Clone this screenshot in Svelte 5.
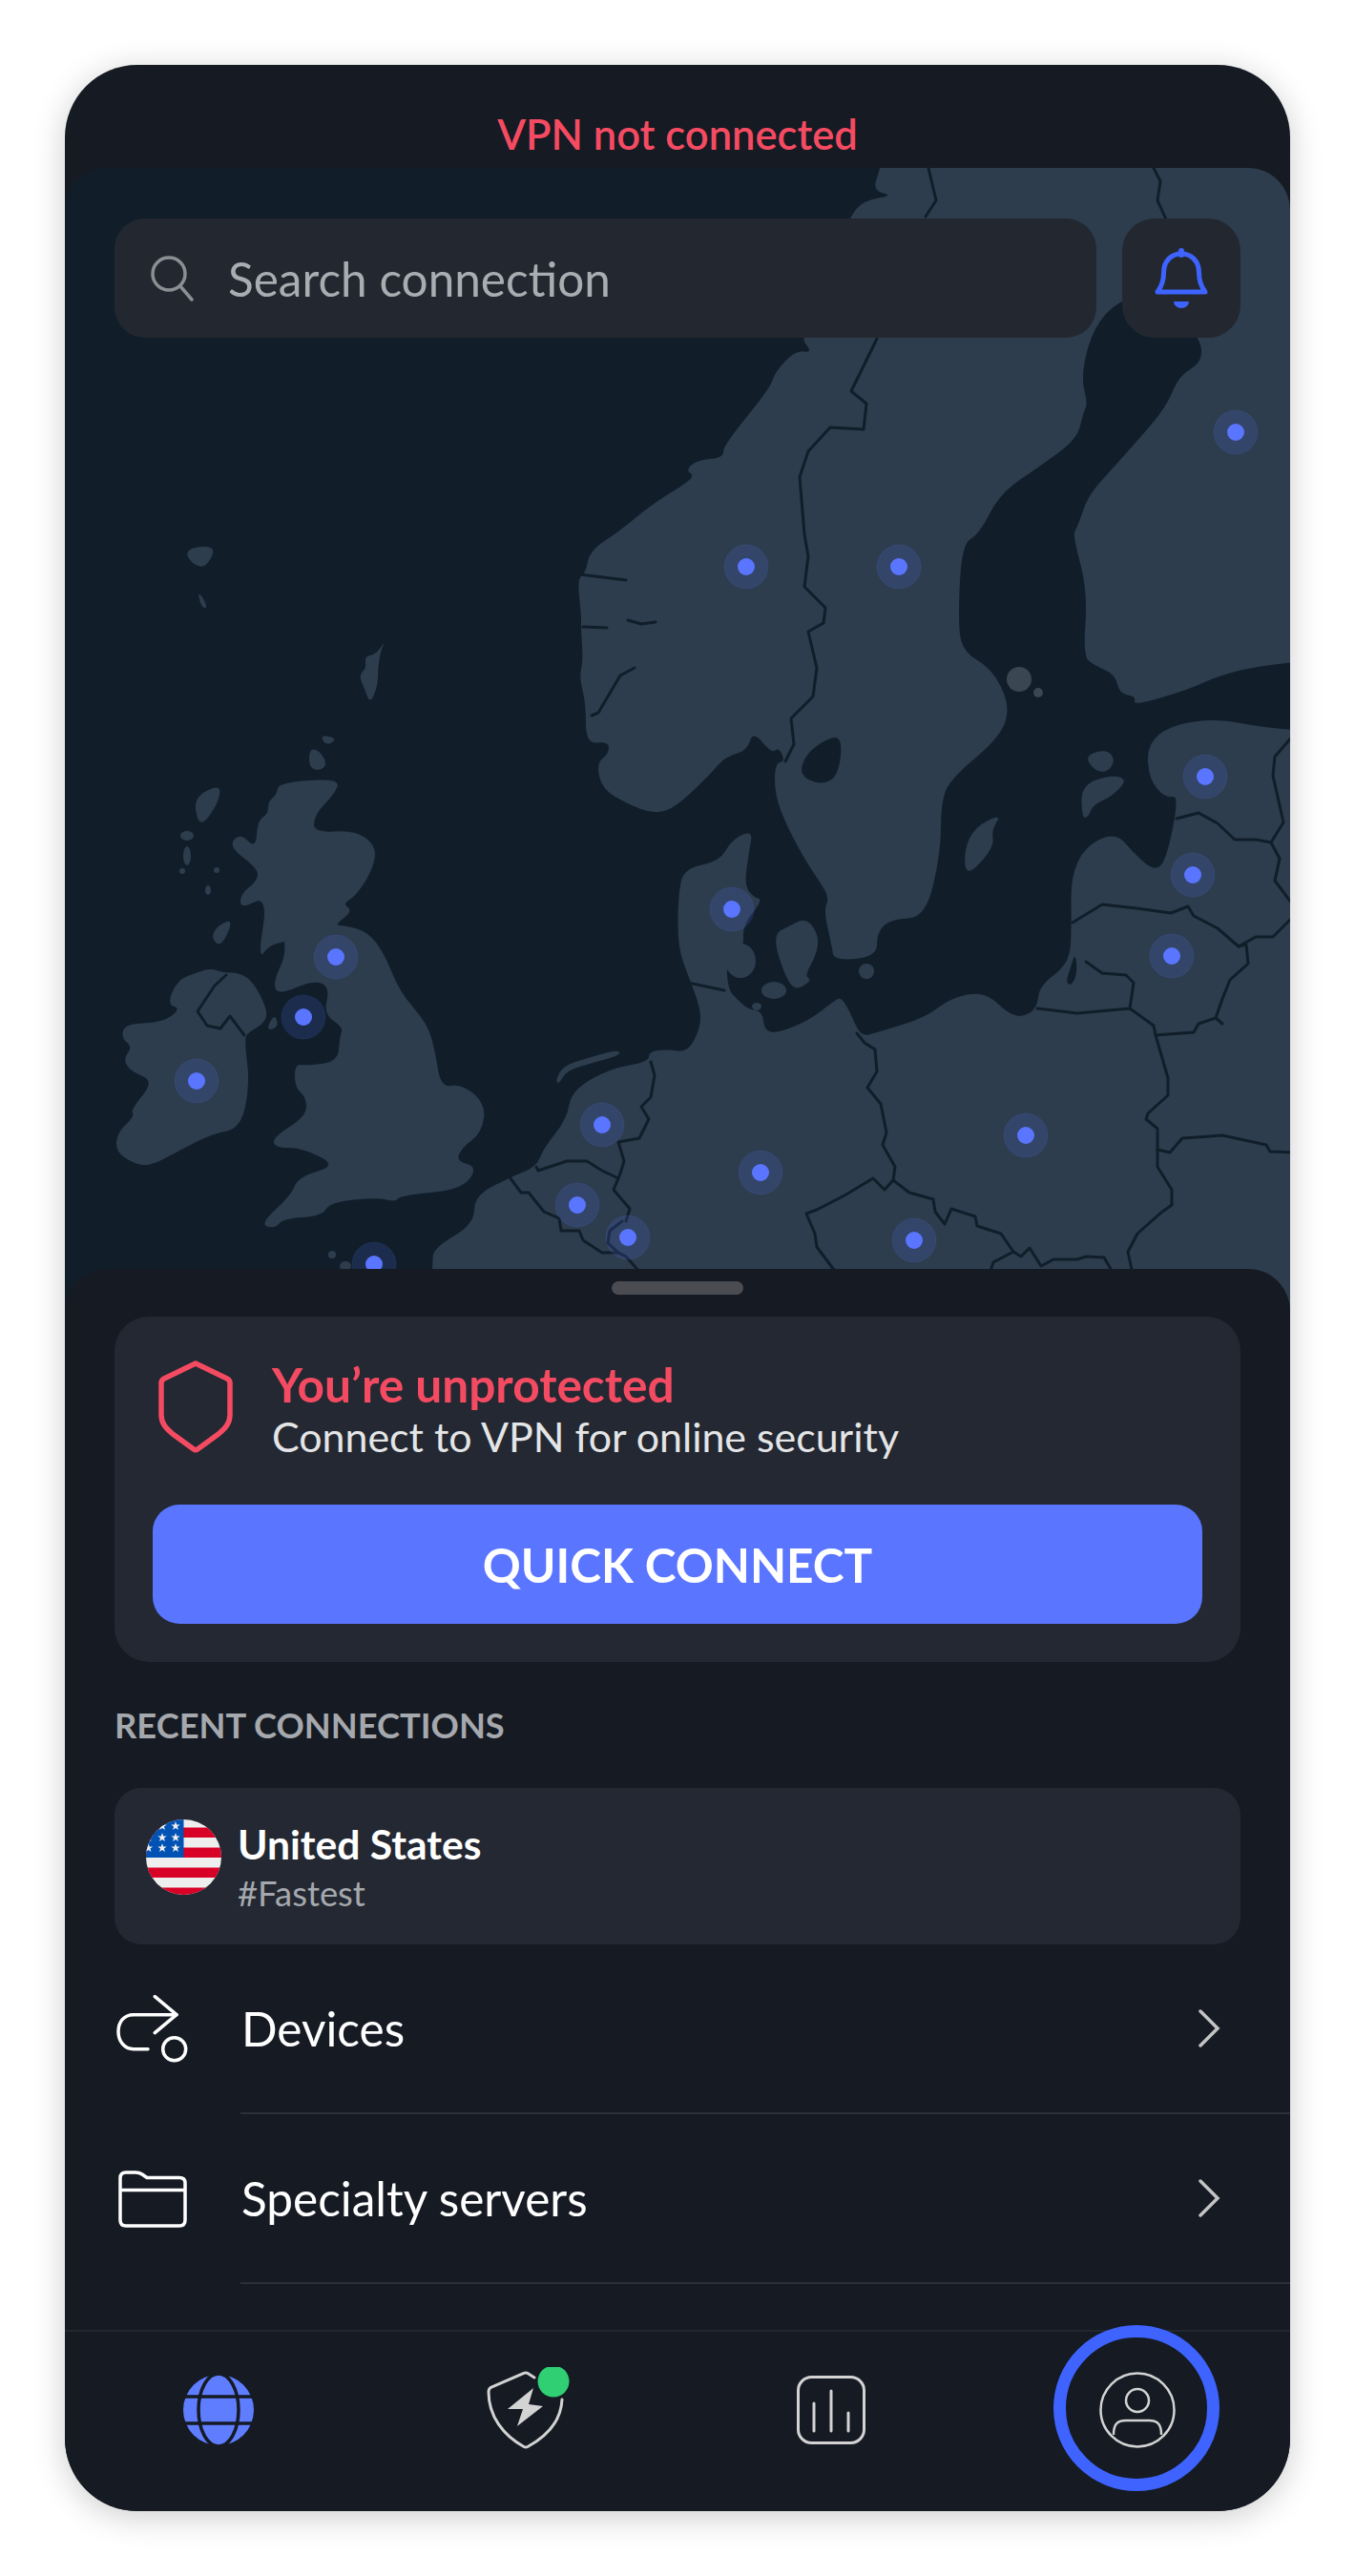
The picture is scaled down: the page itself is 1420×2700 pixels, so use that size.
<script>
    // turn "x,y x,y ..." into a soft closed outline
    function pts(s) {
        return s.trim().split(/\s+/).map((p) => p.split(",").map(Number));
    }
    function smooth(s) {
        const p = pts(s);
        const mid = (a, b) => [(a[0] + b[0]) / 2, (a[1] + b[1]) / 2];
        let start = mid(p[p.length - 1], p[0]);
        let d = `M${start[0]} ${start[1]}`;
        p.forEach((c, i) => {
            const m = mid(c, p[(i + 1) % p.length]);
            d += `Q${c[0]} ${c[1]} ${m[0]} ${m[1]}`;
        });
        return d + "Z";
    }
    function line(s) {
        return "M" + pts(s).map((c) => c.join(" ")).join("L");
    }

    const land = [
        // Norway, Sweden, Finland
        "932,120 923,176 914,200 937,205 905,210 890,228 860,300 838,353 852,370 834,367 812,390 807,407 758,467 758,480 731,482 718,493 730,500 685,527 649,557 618,577 614,600 605,607 609,643 609,660 611,693 607,710 614,737 614,780 638,777 638,790 625,800 631,827 658,843 685,853 707,847 743,813 760,793 783,787 789,766 809,790 816,783 823,798 812,800 812,833 825,867 847,907 870,940 863,953 872,993 874,1007 919,1003 919,977 934,963 970,962 986,893 986,843 995,817 1048,773 1059,740 1039,700 1008,683 1004,647 1008,570 1026,560 1048,517 1088,490 1129,460 1135,433 1140,423 1133,397 1142,353 1164,320 1210,300 1258,353 1260,380 1236,393 1222,427 1191,463 1164,493 1140,520 1129,553 1124,560 1140,620 1135,687 1146,697 1169,707 1173,727 1191,730 1187,740 1245,723 1280,707 1325,697 1400,690 1700,690 1700,-100 950,-100",
        // mainland Europe
        "452,1700 452,1323 456,1307 497,1283 497,1253 537,1233 562,1223 570,1203 594,1173 599,1143 639,1120 680,1113 680,1102 700,1100 721,1103 734,1077 734,1057 723,1027 710,993 711,933 718,910 754,903 767,880 789,870 785,893 780,927 789,940 800,943 778,970 780,993 761,1007 763,1037 772,1047 784,1058 799,1060 801,1080 814,1083 847,1070 873,1050 881,1045 889,1057 902,1087 919,1082 969,1067 995,1047 1024,1040 1041,1047 1054,1060 1070,1067 1087,1057 1089,1033 1121,1010 1123,970 1122,920 1137,887 1169,872 1187,893 1209,913 1222,903 1236,833 1222,837 1204,817 1202,780 1227,760 1276,753 1325,763 1400,768 1700,768 1700,1700",
        // Great Britain
        "292,820 357,816 350,833 330,853 328,873 372,870 395,887 390,913 372,940 359,947 370,955 350,970 362,970 386,977 403,1000 419,1040 448,1073 456,1102 462,1140 484,1136 509,1157 505,1187 484,1203 478,1217 501,1223 484,1247 419,1253 415,1260 395,1255 346,1260 337,1275 297,1277 288,1288 272,1283 305,1253 313,1233 354,1222 317,1203 288,1203 286,1192 321,1170 321,1150 309,1140 309,1115 321,1117 354,1113 356,1087 360,1077 339,1063 346,1035 329,1027 292,1043 286,1030 300,1000 296,975 301,987 283,990 270,1007 281,938 252,953 252,937 270,923 270,910 239,887 252,873 268,890 270,860 281,853 281,840 290,833",
        // Ireland
        "221,1015 235,1020 248,1019 264,1027 280,1057 278,1072 260,1082 256,1090 262,1137 252,1183 223,1188 186,1207 158,1222 141,1220 121,1207 123,1187 141,1170 137,1163 162,1133 137,1123 129,1110 139,1097 127,1088 131,1073 170,1072 190,1057 175,1053 186,1027 207,1019",
        // small islands
        "404,671 399,682 396,700 396,718 388,738 382,722 376,708 384,700 382,688 394,686",
        "194,580 203,573 227,573 216,595 203,592",
        "207,620 214,628 217,638 211,636",
        "232,823 228,843 210,868 203,843 212,830",
        "245,963 232,993 221,983 228,970",
        "324,785 334,786 343,800 336,808 324,805",
        "335,770 354,774 342,782",
        "1050,853 1039,870 1042,888 1013,920 1010,893 1021,867",
        "1137,792 1160,785 1169,797 1160,810 1146,807",
        "1133,823 1164,812 1182,817 1165,835 1146,843 1140,857 1134,857",
        "828,970 845,962 858,980 856,1000 843,1023 851,1027 835,1038 824,1027 809,980",
        "288,1063 292,1075 283,1080 280,1076",
        "582,1133 590,1117 619,1108 648,1100 650,1106 621,1114 594,1122 586,1136",
    ];

    const blobs = [
        [776, 1007, 16, 18], [811, 1038, 13, 9], [793, 1055, 5, 4], [908, 1018, 8, 8],
        [196, 876, 7, 5], [196, 897, 4, 10], [191, 913, 3, 3], [227, 912, 3, 3],
        [218, 933, 3, 5], [348, 1315, 4, 4], [362, 1327, 6, 5],
    ];

    // seas and lakes laid on top of the land
    const water = [
        "883,770 879,813 861,823 838,813 843,793 861,777",
        "1127,998 1129,1020 1123,1033 1117,1030 1121,1017",
    ];

    const borders = [
        "972,172 981,210 970,227",
        "919,355 892,410 908,423 905,450 870,448 847,473 838,500 843,560 847,583 843,615 865,637 863,653 847,662 856,700 852,730 829,753 832,780 823,798",
        "1207,172 1216,190 1213,210 1222,230",
        "1233,858 1256,852 1276,863 1294,880 1316,880 1332,883",
        "1356,770 1336,793 1334,813 1345,862 1332,883 1341,900 1336,923 1356,950",
        "1124,967 1155,948 1191,952 1227,957 1245,950 1251,960 1276,973 1298,992 1316,982 1334,982 1356,960",
        "1298,992 1306,990 1308,1010 1289,1027 1281,1047 1274,1067 1281,1073 1274,1067 1256,1073 1251,1082 1211,1085",
        "1087,1057 1129,1062 1184,1057 1209,1075 1211,1085 1224,1130 1224,1148 1203,1167 1201,1173 1213,1183 1213,1223 1228,1247 1228,1263 1218,1270 1192,1293 1182,1312 1188,1340",
        "1138,1008 1155,1020 1180,1022 1188,1030 1184,1057",
        "1213,1205 1226,1208 1239,1193 1281,1190 1327,1200 1331,1207 1356,1208",
        "898,1083 906,1093 917,1100 919,1123 909,1140 923,1157 929,1187 925,1200 938,1223 936,1237 953,1250 978,1257 980,1270 990,1283 997,1267 1022,1275 1024,1285 1049,1293 1062,1312 1070,1317 1079,1308 1091,1327 1104,1320 1129,1320 1138,1317 1157,1318 1167,1335",
        "1062,1312 1041,1323 1037,1335",
        "936,1237 927,1247 915,1235 885,1253 856,1268 845,1272 854,1293 856,1307 877,1335",
        "721,1030 759,1038",
        "682,1113 686,1127 682,1150 672,1160 680,1173 670,1193 648,1197 654,1217 650,1230 648,1235 643,1247 660,1267 656,1280",
        "562,1223 564,1227 594,1217 615,1217 631,1227 648,1235",
        "535,1235 546,1250 554,1250 570,1270 586,1277 588,1290 607,1290 611,1300 631,1313 648,1313 656,1317 672,1335",
        "652,1280 639,1290 637,1303 648,1313",
        "237,1022 225,1033 215,1048 207,1060 217,1075 231,1078 241,1065 250,1077 256,1085",
        "607,602 656,608",
        "611,657 636,658",
        "658,650 672,654 687,652",
        "665,700 650,708 627,747 620,750",
    ];

    const markers = [
        [1295, 453], [782, 594], [942, 594], [1263, 814], [1250, 917], [1228, 1002],
        [767, 953], [352, 1003], [318, 1066], [206, 1133], [631, 1179], [605, 1263],
        [658, 1297], [392, 1325], [797, 1229], [958, 1300], [1075, 1190],
    ];

    const stripes = [0, 1, 2, 3];
    const stars = [
        [155.5, 1914], [170, 1914], [184, 1914], [155.5, 1926], [170, 1926], [184, 1926],
        [155.5, 1937], [170, 1937], [184, 1937],
    ];
    function star(cx, cy) {
        let out = [];
        for (let i = 0; i < 10; i++) {
            const r = i % 2 ? 2 : 5;
            const a = (Math.PI / 5) * i - Math.PI / 2;
            out.push(`${cx - 153 + r * Math.cos(a)},${cy - 1907 + r * Math.sin(a)}`);
        }
        return out.join(" ");
    }
</script>

<div class="page">
    <div class="phone">
        <div class="status">VPN not connected</div>

        <div class="map">
            <svg class="land" viewBox="68 176 1284 1198" width="1284" height="1198">
                {#each land as d}
                    <path d={smooth(d)} fill="#2d3d4d" />
                {/each}
                {#each blobs as b}
                    <ellipse cx={b[0]} cy={b[1]} rx={b[2]} ry={b[3]} fill="#2d3d4d" />
                {/each}
                <ellipse cx="1068" cy="712" rx="13" ry="13" fill="#3a4652" />
                <circle cx="1088" cy="726" r="5" fill="#3a4652" />
                {#each water as d}
                    <path d={smooth(d)} fill="#111e2a" />
                {/each}
                {#each borders as d}
                    <path d={line(d)} fill="none" stroke="#111e2a" stroke-width="3" stroke-linejoin="round" stroke-linecap="round" />
                {/each}
                {#each markers as m}
                    <circle cx={m[0]} cy={m[1]} r="23" fill="#5a75ff" fill-opacity="0.16" stroke="#5a75ff" stroke-opacity="0.12" />
                    <circle cx={m[0]} cy={m[1]} r="9" fill="#5a75ff" />
                {/each}
            </svg>

            <div class="search-row">
                <div class="search">
                    <svg width="46" height="48" viewBox="0 0 46 48" fill="none" stroke="#8b8e93" stroke-width="3.5" stroke-linecap="round">
                        <circle cx="19" cy="19" r="17" />
                        <path d="M31 32 L43 46" />
                    </svg>
                    <span>Search connection</span>
                </div>
                <div class="bell">
                    <svg width="56" height="64" viewBox="0 0 56 64">
                        <path d="M3 46 H53 C47 38 46.5 32 46.5 26 C46.5 13 38 6 28 6 C18 6 9.5 13 9.5 26 C9.5 32 9 38 3 46 Z" fill="none" stroke="#3e63ff" stroke-width="5" stroke-linejoin="round" />
                        <path d="M28 3 V7" stroke="#3e63ff" stroke-width="6" stroke-linecap="round" />
                        <path d="M20 56 H36 A8 7 0 0 1 20 56 Z" fill="#3e63ff" />
                    </svg>
                </div>
            </div>
        </div>

        <div class="sheet">
            <div class="handle"></div>

            <div class="card">
                <div class="head">
                    <svg width="78" height="98" viewBox="0 0 78 98" fill="none" stroke="#f54b62" stroke-width="5.5" stroke-linejoin="round">
                        <path d="M39 3 L72 19 Q75 20.5 75 24 V57 C75 66 70 71 63 77 L41 93 Q39 94.5 37 93 L15 77 C8 71 3 66 3 57 V24 Q3 20.5 6 19 Z" />
                    </svg>
                    <div class="head-text">
                        <div class="title">You’re unprotected</div>
                        <div class="sub">Connect to VPN for online security</div>
                    </div>
                </div>
                <button class="quick">QUICK CONNECT</button>
            </div>

            <div class="label">RECENT CONNECTIONS</div>

            <div class="recent">
                <svg class="flag" width="79" height="79" viewBox="0 0 79 79">
                    <defs>
                        <clipPath id="flagclip"><circle cx="39.5" cy="39.5" r="39.5" /></clipPath>
                    </defs>
                    <g clip-path="url(#flagclip)">
                        <rect width="79" height="79" fill="#eeeeee" />
                        {#each stripes as s}
                            <rect y={8.5 + s * 21} width="79" height="10.5" fill="#d80027" />
                        {/each}
                        <rect width="39.5" height="40" fill="#0052b4" />
                        {#each stars as s}
                            <polygon points={star(s[0], s[1])} fill="#eeeeee" />
                        {/each}
                    </g>
                </svg>
                <div class="recent-text">
                    <div class="name">United States</div>
                    <div class="tag">#Fastest</div>
                </div>
            </div>

            <div class="row">
                <svg class="row-icon" width="76" height="72" viewBox="0 0 76 72" fill="none" stroke="#fff" stroke-width="3.5" stroke-linecap="round" stroke-linejoin="round">
                    <path d="M33 56.7 H18 C8 56.7 2 48 2 38.5 C2 28 8 20.7 18 20.7 H63" />
                    <path d="M40.3 1.7 L63 20.7 L40.3 39.7" />
                    <circle cx="60.7" cy="56.7" r="12" />
                </svg>
                <div class="row-body">
                    <span>Devices</span>
                    <svg width="24" height="40" viewBox="0 0 24 40" fill="none" stroke="#c4c4c4" stroke-width="3.5" stroke-linecap="round">
                        <path d="M3 2 L21 20 L3 38" />
                    </svg>
                </div>
            </div>
            <div class="row">
                <svg class="row-icon" width="76" height="60" viewBox="0 0 76 60" fill="none" stroke="#fff" stroke-width="3.5" stroke-linejoin="round">
                    <path d="M4 8 Q4 2 10 2 H20 Q24 2 27 4 L32 7.5 H66 Q72 7.5 72 13 V52 Q72 58 66 58 H10 Q4 58 4 52 Z" />
                    <path d="M4 20.5 H72" />
                </svg>
                <div class="row-body">
                    <span>Specialty servers</span>
                    <svg width="24" height="40" viewBox="0 0 24 40" fill="none" stroke="#c4c4c4" stroke-width="3.5" stroke-linecap="round">
                        <path d="M3 2 L21 20 L3 38" />
                    </svg>
                </div>
            </div>
        </div>

        <nav class="tabs">
            <div class="tab">
                <svg width="76" height="76" viewBox="0 0 76 76">
                    <circle cx="38" cy="38" r="37" fill="#5f7dff" />
                    <ellipse cx="38" cy="38" rx="21" ry="38" fill="none" stroke="#151a23" stroke-width="3.5" />
                    <path d="M0 24 H76 M0 52 H76" stroke="#151a23" stroke-width="3.5" />
                </svg>
            </div>
            <div class="tab">
                <svg width="100" height="90" viewBox="0 0 100 90">
                    <path d="M60 11 L53 6.5 Q51 5.5 49 6.5 L15 21 Q12 22.5 12 26 C12 52 28 72 49 83.5 Q51 84.5 53 83.5 C74 72 88 56 89 34" fill="none" stroke="#d3d3d3" stroke-width="3" stroke-linecap="round" />
                    <polygon points="59,22 32,44 48,44 42,62 69,41 54,39" fill="#d3d3d3" />
                    <circle cx="80" cy="15" r="16.5" fill="#30cf74" />
                </svg>
            </div>
            <div class="tab">
                <svg width="72" height="72" viewBox="0 0 72 72" fill="none" stroke="#d3d3d3" stroke-width="3" stroke-linecap="round">
                    <rect x="1.5" y="1.5" width="69" height="69" rx="14" />
                    <path d="M18 29 V58 M36 16 V58 M54 39 V58" />
                </svg>
            </div>
            <div class="tab profile">
                <svg width="80" height="80" viewBox="0 0 80 80" fill="none" stroke="#d3d3d3" stroke-width="2.5">
                    <circle cx="40" cy="40" r="38.5" />
                    <circle cx="40" cy="30" r="12" />
                    <path d="M15 66 C15 56 18 51 28 51 H52 C62 51 65 56 65 66" />
                </svg>
                <div class="ring"></div>
            </div>
        </nav>
    </div>
</div>

<style>
    :global(body) {
        margin: 0;
        background: #fff;
    }

    .page {
        padding: 68px;
        font-family: "Lato", "Liberation Sans", sans-serif;
    }

    .phone {
        display: flex;
        flex-direction: column;
        height: 2564px;
        background: #151a23;
        border-radius: 76px;
        overflow: hidden;
        box-shadow: 0 6px 34px rgba(0, 0, 0, 0.2);
    }

    .status {
        height: 108px;
        flex: none;
        box-sizing: border-box;
        padding-top: 47px;
        text-align: center;
        color: #f54b62;
        font-size: 43.5px;
        line-height: 50px;
        font-weight: 600;
    }

    .map {
        position: relative;
        height: 1198px;
        flex: none;
        background: #111e2a;
        border-radius: 44px 44px 0 0;
        overflow: hidden;
    }

    .land {
        position: absolute;
        inset: 0;
    }

    .search-row {
        position: relative;
        display: flex;
        gap: 27px;
        padding: 53px 52px 0;
    }

    .search {
        flex: 1;
        height: 125px;
        box-sizing: border-box;
        display: flex;
        align-items: center;
        gap: 35px;
        padding: 0 0 0 38px;
        background: #232830;
        border-radius: 32px;
        color: #a9adb2;
        font-size: 49.5px;
    }

    .bell {
        width: 124px;
        height: 125px;
        display: flex;
        align-items: center;
        justify-content: center;
        background: #232830;
        border-radius: 34px;
    }

    .sheet {
        position: relative;
        flex: 1;
        margin-top: -44px;
        background: #151a23;
        border-radius: 44px 44px 0 0;
        overflow: hidden;
    }

    .handle {
        width: 138px;
        height: 14px;
        margin: 13px auto 0;
        background: #4a4c52;
        border-radius: 7px;
    }

    .card {
        height: 362px;
        box-sizing: border-box;
        display: flex;
        flex-direction: column;
        justify-content: space-between;
        margin: 23px 52px 0;
        padding: 45px 40px 40px;
        background: #232832;
        border-radius: 36px;
    }

    .head {
        display: flex;
        align-items: flex-start;
        gap: 41px;
        padding-left: 6px;
    }

    .head svg {
        margin-top: 1px;
        flex: none;
    }

    .title {
        color: #f54b62;
        font-size: 49.6px;
        line-height: 52px;
        font-weight: 700;
    }

    .sub {
        margin-top: 3px;
        color: #e4e5e6;
        font-size: 42.9px;
        line-height: 52px;
    }

    .quick {
        height: 125px;
        border: 0;
        padding: 0;
        background: #5a75ff;
        border-radius: 28px;
        color: #fff;
        font-family: inherit;
        font-size: 49.5px;
        font-weight: 700;
    }

    .label {
        margin: 44px 52px;
        color: #a5a8ad;
        font-size: 36.3px;
        line-height: 44px;
        font-weight: 700;
    }

    .recent {
        height: 164px;
        box-sizing: border-box;
        display: flex;
        align-items: flex-start;
        gap: 17px;
        margin: 0 52px;
        padding: 33px 0 0 33px;
        background: #232832;
        border-radius: 28px;
    }

    .flag {
        flex: none;
    }

    .name {
        margin-top: 1px;
        color: #fff;
        font-size: 42.6px;
        line-height: 50px;
        font-weight: 700;
    }

    .tag {
        margin-top: 2px;
        color: #a5a8ad;
        font-size: 36.4px;
        line-height: 49px;
    }

    .row {
        display: flex;
        align-items: center;
        height: 178px;
        padding-left: 54px;
    }

    .row-icon {
        flex: none;
    }

    .row-body {
        flex: 1;
        align-self: stretch;
        display: flex;
        align-items: center;
        justify-content: space-between;
        margin-left: 54px;
        padding: 0 73px 0 1px;
        border-bottom: 2px solid #2b2f37;
        color: #fff;
        font-size: 49.5px;
    }

    .tabs {
        flex: none;
        display: grid;
        grid-template-columns: repeat(4, 1fr);
        height: 190px;
        box-sizing: border-box;
        padding-bottom: 24px;
        border-top: 2px solid #23272f;
        background: #151a23;
    }

    .tab {
        position: relative;
        display: flex;
        align-items: center;
        justify-content: center;
    }

    .ring {
        position: absolute;
        left: 50%;
        top: 50%;
        width: 174px;
        height: 174px;
        box-sizing: border-box;
        margin: -89px 0 0 -88px;
        border: 13px solid #3e63ff;
        border-radius: 50%;
    }
</style>
